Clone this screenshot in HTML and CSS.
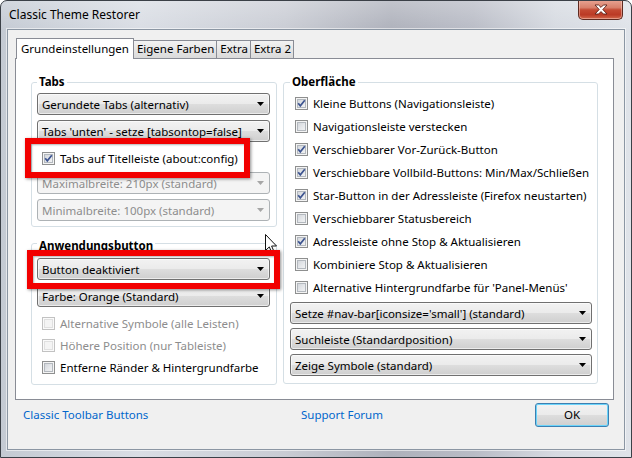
FILE: index.html
```html
<!DOCTYPE html>
<html lang="de">
<head>
<meta charset="utf-8">
<title>Classic Theme Restorer</title>
<link rel="stylesheet" href="styles.css">
</head>
<body>
<div class="window">
  <div class="titlebar">
    <span class="title">Classic Theme Restorer</span>
    <div class="close">
      <svg width="14" height="11" viewBox="-1 -1 14 11"><polygon points="0,0 3.6,0 6,2.4 8.4,0 12,0 7.8,4.5 12,9 8.4,9 6,6.6 3.6,9 0,9 4.2,4.5" fill="#fff" stroke="#5a2218" stroke-width="0.9" stroke-linejoin="round"/></svg>
    </div>
  </div>
  <div class="client">
    <div class="tabstrip">
      <div class="tab sel">Grundeinstellungen</div>
      <div class="tab">Eigene Farben</div>
      <div class="tab">Extra</div>
      <div class="tab">Extra 2</div>
    </div>
    <div class="panel">
      <div class="col">
        <fieldset class="group g-tabs">
          <legend>Tabs</legend>
          <div class="dd"><span>Gerundete Tabs (alternativ)</span><i class="arr"></i></div>
          <div class="dd"><span>Tabs 'unten' - setze [tabsontop=false]</span><i class="arr"></i></div>
          <div class="cbrow"><span class="cb"><svg width="11" height="11" viewBox="0 0 11 11"><path d="M2.2 5.2 L4.3 7.8 L8.8 2.2" fill="none" stroke="#3d5490" stroke-width="1.7"/></svg></span>Tabs auf Titelleiste (about:config)</div>
          <div class="dd dis"><span>Maximalbreite: 210px (standard)</span><i class="arr"></i></div>
          <div class="dd dis last"><span>Minimalbreite: 100px (standard)</span><i class="arr"></i></div>
        </fieldset>
        <fieldset class="group g-app">
          <legend>Anwendungsbutton</legend>
          <div class="dd"><span>Button deaktiviert</span><i class="arr"></i></div>
          <div class="dd"><span>Farbe: Orange (Standard)</span><i class="arr"></i></div>
          <div class="cbrow dis"><span class="cb"></span>Alternative Symbole (alle Leisten)</div>
          <div class="cbrow dis"><span class="cb"></span>Höhere Position (nur Tableiste)</div>
          <div class="cbrow"><span class="cb"></span>Entferne Ränder &amp; Hintergrundfarbe</div>
        </fieldset>
      </div>
      <fieldset class="group g-ui">
        <legend>Oberfläche</legend>
        <div class="cbrow r"><span class="cb"><svg width="11" height="11" viewBox="0 0 11 11"><path d="M2.2 5.2 L4.3 7.8 L8.8 2.2" fill="none" stroke="#3d5490" stroke-width="1.7"/></svg></span>Kleine Buttons (Navigationsleiste)</div>
        <div class="cbrow r"><span class="cb"></span>Navigationsleiste verstecken</div>
        <div class="cbrow r"><span class="cb"><svg width="11" height="11" viewBox="0 0 11 11"><path d="M2.2 5.2 L4.3 7.8 L8.8 2.2" fill="none" stroke="#3d5490" stroke-width="1.7"/></svg></span>Verschiebbarer Vor-Zurück-Button</div>
        <div class="cbrow r"><span class="cb"><svg width="11" height="11" viewBox="0 0 11 11"><path d="M2.2 5.2 L4.3 7.8 L8.8 2.2" fill="none" stroke="#3d5490" stroke-width="1.7"/></svg></span>Verschiebbare Vollbild-Buttons: Min/Max/Schließen</div>
        <div class="cbrow r"><span class="cb"><svg width="11" height="11" viewBox="0 0 11 11"><path d="M2.2 5.2 L4.3 7.8 L8.8 2.2" fill="none" stroke="#3d5490" stroke-width="1.7"/></svg></span>Star-Button in der Adressleiste (Firefox neustarten)</div>
        <div class="cbrow r"><span class="cb"></span>Verschiebbarer Statusbereich</div>
        <div class="cbrow r"><span class="cb"><svg width="11" height="11" viewBox="0 0 11 11"><path d="M2.2 5.2 L4.3 7.8 L8.8 2.2" fill="none" stroke="#3d5490" stroke-width="1.7"/></svg></span>Adressleiste ohne Stop &amp; Aktualisieren</div>
        <div class="cbrow r"><span class="cb"></span>Kombiniere Stop &amp; Aktualisieren</div>
        <div class="cbrow r"><span class="cb"></span>Alternative Hintergrundfarbe für 'Panel-Menüs'</div>
        <div class="dd first"><span>Setze #nav-bar[iconsize='small'] (standard)</span><i class="arr"></i></div>
        <div class="dd"><span>Suchleiste (Standardposition)</span><i class="arr"></i></div>
        <div class="dd last"><span>Zeige Symbole (standard)</span><i class="arr"></i></div>
      </fieldset>
    </div>
    <div class="footer">
      <span class="link first-link">Classic Toolbar Buttons</span>
      <span class="link">Support Forum</span>
      <div class="okbtn">OK</div>
    </div>
  </div>
  <svg class="cursor" width="13" height="20" viewBox="0 0 13 20"><path d="M0.5 0.5 L0.5 16.5 L4.3 12.9 L6.8 18.8 L9.1 17.8 L6.6 12 L11.5 12 Z" fill="#fff" stroke="#111" stroke-width="1" stroke-linejoin="round"/></svg>
  <div class="mark m1"></div>
  <div class="mark m2"></div>
</div>
</body>
</html>
```

FILE: styles.css
```css
* { box-sizing: border-box; }
html, body { margin: 0; padding: 0; background: #fff; }
body {
  font-family: "Noto Sans", "Segoe UI", sans-serif;
  font-size: 11.5px;
  color: #000;
}
.window {
  position: relative;
  width: 632px;
  height: 458px;
  border: 1px solid #3b4047;
  border-radius: 7px 7px 0 0;
  background:
    linear-gradient(180deg, rgba(255,255,255,0.25) 0%, rgba(255,255,255,0) 30px),
    linear-gradient(90deg, #c4cad3 0%, #d9dde4 22%, #c9ccd4 45%, #aeb1bb 62%, #b9bcc6 75%, #d6dae1 88%, #dfe3e9 100%);
  display: flex;
  flex-direction: column;
  overflow: hidden;
}
.titlebar {
  height: 28px;
  display: flex;
  align-items: flex-start;
  padding-left: 8px;
  flex: none;
}
.title { line-height: 28px; color: #000; font-size: 12px; }
.close {
  margin-left: auto;
  margin-right: 8px;
  margin-top: -1px;
  width: 45px;
  height: 20px;
  border: 1px solid #5e2a20;
  border-top: none;
  border-radius: 0 0 5px 5px;
  background: linear-gradient(180deg, #e9a594 0%, #d8806b 40%, #c44a33 52%, #bb3a25 78%, #d36a4e 100%);
  box-shadow: inset 0 0 0 1px rgba(255,220,210,0.45);
  display: flex;
  align-items: center;
  justify-content: center;
}
.client {
  flex: 1;
  margin: 0 6px 7px 6px;
  border: 1px solid #8b96a3;
  background: #f0f0f0;
  box-shadow: 0 0 0 1px rgba(255,255,255,0.55);
  display: flex;
  flex-direction: column;
}
.tabstrip {
  display: flex;
  align-items: flex-end;
  height: 29px;
  padding: 8px 0 0 8px;
  flex: none;
}
.tab {
  height: 18px;
  margin-bottom: 1px;
  padding: 0 2px 0 3px;
  line-height: 16px;
  border: 1px solid #898c95;
  border-bottom: none;
  background: linear-gradient(180deg, #f3f3f3 0%, #e6e6e6 50%, #dadada 100%);
  margin-left: -1px;
}
.tab.sel {
  position: relative;
  z-index: 1;
  height: 21px;
  margin-bottom: 0;
  margin-left: 0;
  padding: 0 4px 0 4px;
  line-height: 19px;
  background: #fff;
}
.panel {
  margin: -1px 10px 0 7px;
  height: 342px;
  border: 1px solid #898c95;
  background: #fff;
  display: flex;
  align-items: flex-start;
  gap: 6px;
  padding: 15px 0 0 15px;
  flex: none;
}
.col { width: 246px; display: flex; flex-direction: column; }
.group {
  margin: 0;
  border: 1px solid #d5dfe5;
  border-radius: 3px;
  min-width: 0;
}
.group legend {
  padding: 0 2px;
  font-weight: bold;
  line-height: 16px;
}
.g-tabs { width: 246px; padding: 3px 6px 5px 5px; }
.g-app { width: 246px; margin-top: 8px; padding: 7px 6px 6px 5px; }
.g-app legend { position: relative; top: 3px; }
.g-ui { width: 315px; padding: 2px 5px 7px 6px; }
.dd {
  height: 22px;
  margin-bottom: 5px;
  border: 1px solid #707070;
  border-radius: 3px;
  background: linear-gradient(180deg, #f2f2f2 0%, #ebebeb 48%, #dddddd 52%, #cfcfcf 100%);
  box-shadow: inset 0 0 0 1px rgba(255,255,255,0.6);
  display: flex;
  align-items: center;
  padding: 0 5px 0 4px;
  white-space: nowrap;
}
.dd.last { margin-bottom: 0; }
.dd.first { margin-top: 3px; margin-bottom: 4px; }
.g-ui .dd { margin-bottom: 4px; }
.g-ui .dd.last { margin-bottom: 0; }
.arr {
  margin-left: auto;
  width: 7px;
  height: 4px;
  background: #000;
  clip-path: polygon(0 0, 100% 0, 50% 100%);
  flex: none;
}
.dd.dis {
  border-color: #adb2b5;
  background: #f4f4f4;
  box-shadow: none;
  color: #8d8d8d;
}
.dd.dis .arr { background: #a6a6a6; }
.g-tabs .cbrow { margin-top: 0; margin-bottom: 3px; }
.cbrow {
  height: 22px;
  display: flex;
  align-items: center;
  padding-left: 5px;
  gap: 5px;
  white-space: nowrap;
}
.cbrow.r { height: 23px; }
.cb {
  width: 13px;
  height: 13px;
  flex: none;
  border: 1px solid #8e8f8f;
  background: linear-gradient(135deg, #cbcfd5 0%, #e6e8eb 55%, #f8f8f8 100%);
  box-shadow: inset 0 0 0 1px #f4f4f4, inset 0 0 0 2px #b3b8be;
  display: flex;
}
.cb svg { display: block; }
.cbrow.dis { color: #8d8d8d; }
.cbrow.dis .cb {
  border-color: #c2c2c2;
  background: #f4f4f4;
  box-shadow: inset 0 0 0 1px #fafafa, inset 0 0 0 2px #e0e0e0;
}
.footer {
  display: flex;
  align-items: center;
  height: 23px;
  margin-top: 3px;
  padding-left: 15px;
}
.link { color: #0066cc; }
.first-link { width: 278px; }
.okbtn {
  margin-left: auto;
  margin-right: 15px;
  width: 74px;
  height: 24px;
  border: 1px solid #3c7fb1;
  border-radius: 3px;
  background: linear-gradient(180deg, #f2f2f2 0%, #ebebeb 48%, #dddddd 52%, #cfcfcf 100%);
  box-shadow: inset 0 0 0 1px #6bd4fa;
  display: flex;
  align-items: center;
  justify-content: center;
}
.cursor { position: absolute; left: 264px; top: 233px; }
.mark {
  position: absolute;
  border: 6px solid #f20000;
  box-shadow: 1px 1px 3px rgba(0,0,0,0.45), inset 1px 1px 2px rgba(0,0,0,0.3);
}
.m1 { left: 24px; top: 137px; width: 225px; height: 40px; }
.m2 { left: 26px; top: 249px; width: 253px; height: 39px; }
```
